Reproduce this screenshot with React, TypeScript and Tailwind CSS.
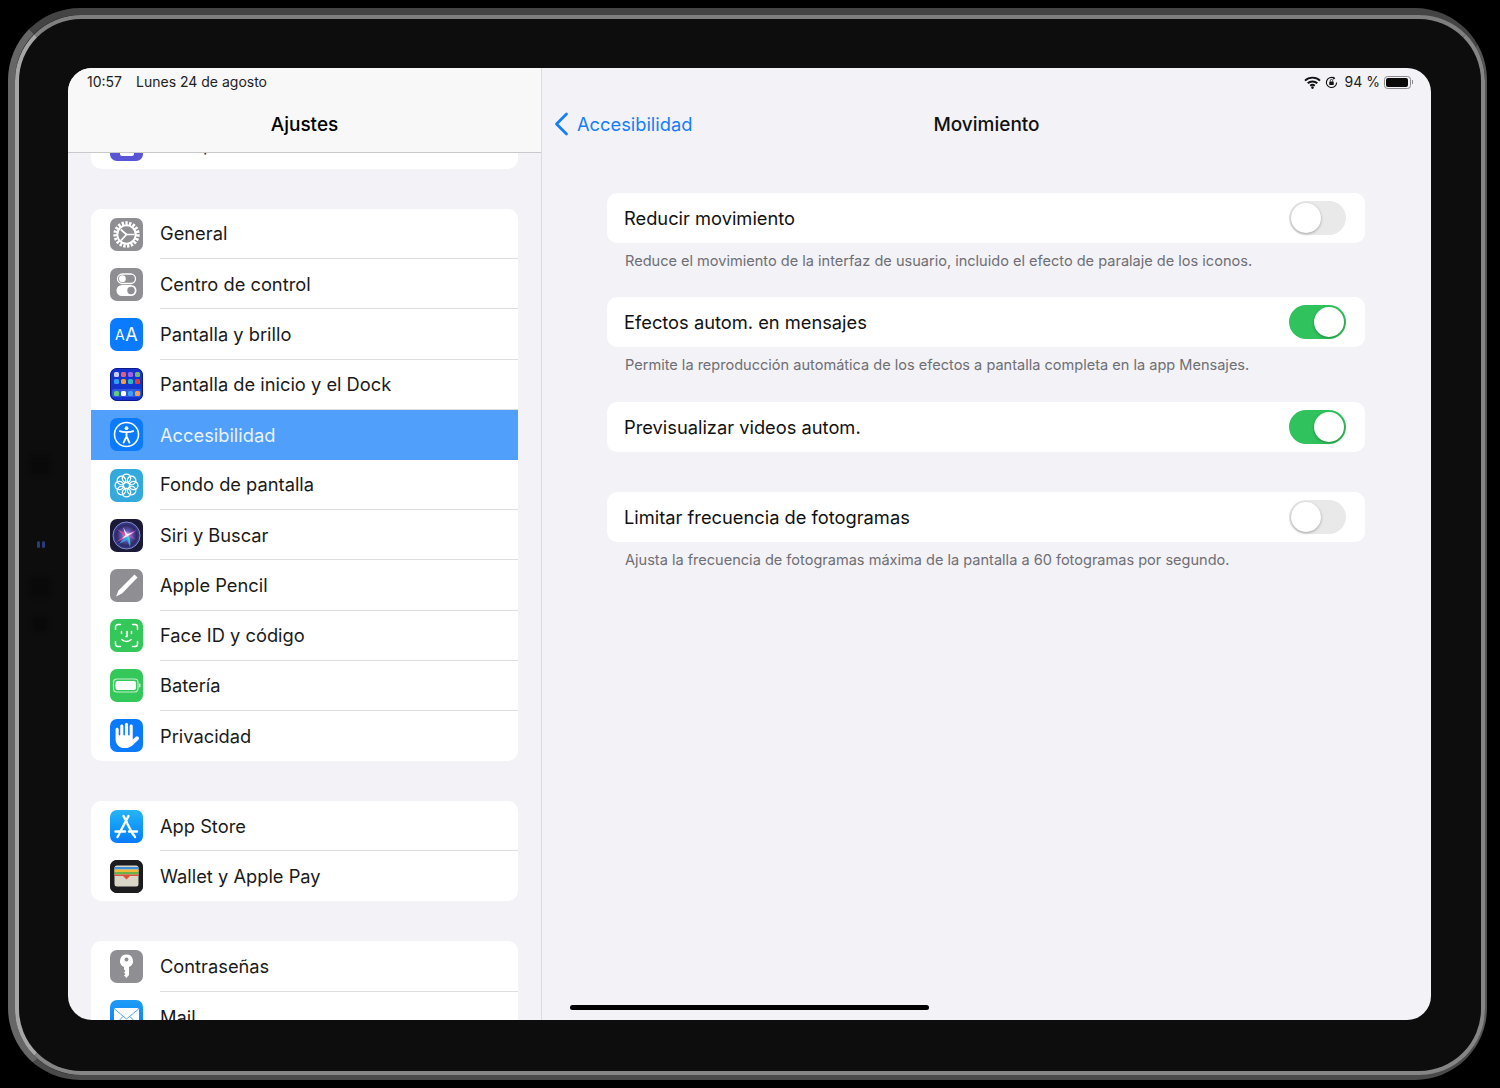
import { FaHand } from "react-icons/fa6";
import type { ReactNode } from "react";

function IconBox({ className, children }: { className: string; children: ReactNode }) {
  return (
    <div className={`flex h-[33px] w-[33px] shrink-0 items-center justify-center overflow-hidden rounded-[7px] ${className}`}>
      {children}
    </div>
  );
}

function GearIcon() {
  return (
    <svg width="29" height="29" viewBox="0 0 29 29" fill="none" stroke="white">
      <circle cx="14.5" cy="14.5" r="11.3" strokeWidth="3.8" strokeDasharray="2.3 1.4" />
      <circle cx="14.5" cy="14.5" r="9.2" strokeWidth="2" />
      <path d="M14.5 14.5 L8.8 9.5 M14.5 14.5 L22.5 14.5 M14.5 14.5 L9 20.5" strokeWidth="1.7" />
    </svg>
  );
}

function ControlIcon() {
  return (
    <svg width="33" height="33" viewBox="0 0 33 33">
      <rect x="7.5" y="6" width="18" height="9.5" rx="4.75" fill="none" stroke="white" strokeWidth="1.3" />
      <circle cx="12.4" cy="10.7" r="3.4" fill="white" />
      <rect x="6.5" y="17" width="20" height="11" rx="5.5" fill="white" />
      <circle cx="21" cy="22.5" r="3.7" fill="#8e8e93" />
    </svg>
  );
}

function HomeIcon() {
  const rows = [
    ["#c8d0f0", "#e0607a", "#a060e0", "#70b870"],
    ["#30a0f0", "#f0a030", "#30b8c0", "#d84040"],
  ];
  const dock = ["#60d070", "#ffffff", "#40a0f0", "#f0a050"];
  return (
    <div className="flex h-full w-full flex-col justify-center gap-[2px] rounded-[7px] border border-[#0d1b8a] bg-[#1434d0]">
      {rows.map((row, i) => (
        <div key={i} className="flex justify-center gap-[2px]">
          {row.map((c, j) => (
            <div key={j} className="h-[5px] w-[5px] rounded-[1.5px]" style={{ backgroundColor: c }} />
          ))}
        </div>
      ))}
      <div className="mx-[1px] mt-[3px] flex justify-center gap-[2px] rounded-[2px] bg-[#2f5ae0] py-[1.5px]">
        {dock.map((c, j) => (
          <div key={j} className="h-[5px] w-[5px] rounded-[1.5px]" style={{ backgroundColor: c }} />
        ))}
      </div>
    </div>
  );
}

function AccessIcon() {
  return (
    <svg width="33" height="33" viewBox="0 0 33 33" fill="none" stroke="white">
      <circle cx="16.5" cy="16.5" r="12" strokeWidth="1.6" />
      <circle cx="16.5" cy="10.2" r="1.9" fill="white" stroke="none" />
      <path d="M9.8 13.2 C13 14.4 20 14.4 23.2 13.2 M16.5 14.4 V18.4 M16.5 18.4 L13.6 24.6 M16.5 18.4 L19.4 24.6" strokeWidth="1.9" strokeLinecap="round" />
    </svg>
  );
}

function FlowerIcon() {
  const petals = [0, 45, 90, 135, 180, 225, 270, 315];
  return (
    <svg width="33" height="33" viewBox="0 0 33 33" fill="none" stroke="white" strokeWidth="1.3">
      {petals.map((a) => (
        <circle key={a} cx="16.5" cy="9.3" r="4.2" transform={`rotate(${a} 16.5 16.5)`} />
      ))}
      <circle cx="16.5" cy="16.5" r="3.2" />
    </svg>
  );
}

function SiriIcon() {
  return (
    <svg width="33" height="33" viewBox="0 0 33 33">
      <defs>
        <radialGradient id="siriOrb" cx="50%" cy="50%" r="50%">
          <stop offset="0%" stopColor="#e8f4ff" />
          <stop offset="35%" stopColor="#6a5ab8" />
          <stop offset="75%" stopColor="#2c2a66" />
          <stop offset="100%" stopColor="#3a3f90" />
        </radialGradient>
      </defs>
      <circle cx="16.5" cy="16.5" r="13.5" fill="url(#siriOrb)" stroke="#8288cc" strokeWidth="1" />
      <path d="M16.5 15 L7 10 L14 17 L6 23 L16 19 Z" fill="#e0489a" opacity="0.85" />
      <path d="M16 17 L9 25 L17 21 L20 28 L20 18 Z" fill="#2fa8e8" opacity="0.9" />
      <path d="M17 16 L26 21 L21 16 L27 11 L18 14 Z" fill="#c84fc0" opacity="0.8" />
      <path d="M16.5 17.5 L21 27 L19 18 Z" fill="#40e0b0" opacity="0.8" />
      <path d="M13 8 L17 15 L24 13 L18 17 L12 20 L15.5 16 Z" fill="#ffffff" opacity="0.9" />
    </svg>
  );
}

function PencilIcon() {
  return (
    <svg width="33" height="33" viewBox="0 0 33 33" fill="white">
      <path d="M24.5 5.5 L27.5 8.5 L12 24.5 L6 27.5 L8.5 21.5 Z" />
    </svg>
  );
}

function FaceIcon() {
  return (
    <svg width="33" height="33" viewBox="0 0 33 33" fill="none" stroke="white" strokeWidth="1.5" strokeLinecap="round">
      <path d="M5.5 10.5 V8 A2.5 2.5 0 0 1 8 5.5 H10.5 M22.5 5.5 H25 A2.5 2.5 0 0 1 27.5 8 V10.5 M27.5 22.5 V25 A2.5 2.5 0 0 1 25 27.5 H22.5 M10.5 27.5 H8 A2.5 2.5 0 0 1 5.5 25 V22.5" />
      <path d="M11.5 12.5 V14.5 M21.5 12.5 V14.5 M17 12.5 V17.5 H15.8 M11.8 20.5 C14 23 19 23 21.2 20.5" />
    </svg>
  );
}

function BatteryIcon() {
  return (
    <svg width="33" height="33" viewBox="0 0 33 33">
      <rect x="3.5" y="10" width="24.5" height="13" rx="3.5" fill="none" stroke="#c8f0d0" strokeWidth="1.2" />
      <rect x="5.5" y="12" width="20.5" height="9" rx="2" fill="white" />
      <rect x="29" y="14.5" width="1.5" height="4" rx="0.75" fill="#c8f0d0" />
    </svg>
  );
}

function AppStoreIcon() {
  return (
    <svg width="33" height="33" viewBox="0 0 33 33" fill="none" stroke="white" strokeWidth="2.4" strokeLinecap="round">
      <path d="M18.5 6 L9.5 23 M13.5 6 L17 12.5 M17.5 14 L23 24.5 M5.5 21.5 H15 M19 21.5 H27 M9 24.5 L7.5 27 M23.5 24.5 L25 27" />
    </svg>
  );
}

function WalletIcon() {
  return (
    <svg width="33" height="33" viewBox="0 0 33 33">
      <rect x="0" y="0" width="33" height="33" fill="#1c1c1e" />
      <rect x="4.5" y="5.5" width="24" height="21" rx="2.5" fill="#d9d6c8" />
      <rect x="4.5" y="7" width="24" height="2.5" fill="#3f8fd8" />
      <rect x="4.5" y="9.5" width="24" height="2.5" fill="#f0b93a" />
      <rect x="4.5" y="12" width="24" height="2.5" fill="#6cb24a" />
      <path d="M4.5 14.5 H28.5 V16 H20 L16.5 19.5 L13 16 H4.5 Z" fill="#e2513f" />
    </svg>
  );
}

function KeyIcon() {
  return (
    <svg width="33" height="33" viewBox="0 0 33 33" fill="white">
      <path fillRule="evenodd" d="M16.5 4.5 A6.5 6.5 0 0 1 19 17 V25 L16.5 28 L14 25.5 L15.5 24 L14 22.5 L15.5 21 L14 19.5 V17 A6.5 6.5 0 0 1 16.5 4.5 Z M16.5 7.5 A2 2 0 1 0 16.5 11.5 A2 2 0 1 0 16.5 7.5 Z" />
    </svg>
  );
}

function MailIcon() {
  return (
    <svg width="33" height="33" viewBox="0 0 33 33" fill="none">
      <rect x="4" y="8" width="25" height="18" rx="2" fill="white" />
      <path d="M4.5 9 L16.5 19 L28.5 9 M4.5 25.5 L13 16.5 M28.5 25.5 L20 16.5" stroke="#5aa8f0" strokeWidth="1" />
    </svg>
  );
}

function Row({ icon, label, selected, last }: { icon: ReactNode; label: string; selected?: boolean; last?: boolean }) {
  return (
    <div className={`flex h-[50.2px] items-center pl-[19px] ${selected ? "bg-[#4f9ffb]" : ""}`}>
      {icon}
      <div className={`ml-[17px] flex h-full flex-1 items-center text-[18.3px] leading-none ${selected ? "text-[#eaf3ff]" : "text-[#1a1a1a]"} ${last || selected ? "" : "border-b border-[#dedee1]"}`}>
        {label}
      </div>
    </div>
  );
}

function Toggle({ on }: { on?: boolean }) {
  return (
    <div className={`flex h-[34px] w-[57px] items-center rounded-full p-[2px] ${on ? "justify-end bg-[#30c25c]" : "justify-start bg-[#e9e9ea]"}`}>
      <div className="h-[30px] w-[30px] rounded-full bg-white shadow-[0_1px_3px_rgba(0,0,0,0.3)]" />
    </div>
  );
}

function SettingCard({ label, on }: { label: string; on?: boolean }) {
  return (
    <div className="flex h-[50px] items-center justify-between rounded-[10px] bg-white pl-[17px] pr-[19px]">
      <span className="text-[18.3px] leading-none text-[#111]">{label}</span>
      <Toggle on={on} />
    </div>
  );
}

function Note({ children }: { children: ReactNode }) {
  return <p className="px-[18px] pt-[9px] text-[14.55px] leading-[18px] text-[#6f6f74]">{children}</p>;
}

export default function App() {
  return (
    <div className="h-[1088px] w-[1500px] overflow-hidden bg-black pl-[8px] pt-[8px] [font-family:Inter,sans-serif]">
      {/* outer edge of the device */}
      <div className="h-[1072px] w-[1479px] rounded-[72px] border-b-[5px] border-l-[7px] border-r-[2px] border-t-[7px] border-b-[#4a4a4a] border-l-[#666] border-r-[#555] border-t-[#444]">
        <div className="relative h-[1060px] w-[1470px] rounded-[66px] border-[4px] border-b-[#858585] border-l-[#a6a6a6] border-r-[#858585] border-t-[#7f7f7f] bg-[#0d0d0d] pb-[51px] pl-[49px] pr-[50px] pt-[49px]">
          <div className="absolute left-[18px] top-[522px] flex gap-[2px]">
            <div className="h-[7px] w-[3px] rounded-full bg-[#2a3c78]" />
            <div className="h-[7px] w-[3px] rounded-full bg-[#2a3c78]" />
          </div>
          <div className="absolute left-[11px] top-[436px] h-[20px] w-[20px] rounded-[6px] bg-[#090909] blur-[2px]" />
          <div className="absolute left-[11px] top-[558px] h-[20px] w-[20px] rounded-[6px] bg-[#090909] blur-[2px]" />
          <div className="absolute left-[13px] top-[597px] h-[16px] w-[16px] rounded-full bg-[#090909] blur-[2px]" />

          <div className="relative flex h-full overflow-hidden rounded-[24px] bg-[#f2f2f7]">
            <aside className="flex w-[474px] shrink-0 flex-col overflow-hidden border-r border-[#dcdce0]">
              <header className="z-10 h-[85px] shrink-0 border-b border-[#c9c9cc] bg-[#f8f8f9] pl-[19px] pt-[5px]">
                <div className="flex gap-[14px] text-[14px] leading-[17px] text-[#222]">
                  <span>10:57</span>
                  <span>Lunes 24 de agosto</span>
                </div>
                <div className="-ml-[19px] mt-[21px] text-center text-[19px] font-medium leading-[28px] text-black">Ajustes</div>
              </header>

              <div className="flex flex-col gap-[40px] pl-[23px] pr-[23px]">
                <div className="h-[16px] overflow-hidden rounded-b-[10px] bg-white">
                  <div className="-mt-[34px]">
                    <Row
                      icon={<IconBox className="bg-[#5856d6]"><div className="mt-[10px] h-[14px] w-[14px] rounded-[2px] bg-white" /></IconBox>}
                      label="Tiempo de uso"
                      last
                    />
                  </div>
                </div>

                <div className="overflow-hidden rounded-[10px] bg-white">
                  <Row icon={<IconBox className="bg-[#8e8e93]"><GearIcon /></IconBox>} label="General" />
                  <Row icon={<IconBox className="bg-[#8e8e93]"><ControlIcon /></IconBox>} label="Centro de control" />
                  <Row icon={<IconBox className="bg-[#0a7aff] pt-[1px] text-[18px] tracking-[0.5px] text-white"><span className="text-[14px]">A</span>A</IconBox>} label="Pantalla y brillo" />
                  <Row icon={<IconBox className="bg-[#1434d0]"><HomeIcon /></IconBox>} label="Pantalla de inicio y el Dock" />
                  <Row icon={<IconBox className="bg-[#0a7aff]"><AccessIcon /></IconBox>} label="Accesibilidad" selected />
                  <Row icon={<IconBox className="bg-[#34aadc]"><FlowerIcon /></IconBox>} label="Fondo de pantalla" />
                  <Row icon={<IconBox className="bg-[#1a1a38]"><SiriIcon /></IconBox>} label="Siri y Buscar" />
                  <Row icon={<IconBox className="bg-[#8e8e93]"><PencilIcon /></IconBox>} label="Apple Pencil" />
                  <Row icon={<IconBox className="bg-[#34c759]"><FaceIcon /></IconBox>} label="Face ID y código" />
                  <Row icon={<IconBox className="bg-[#34c759]"><BatteryIcon /></IconBox>} label="Batería" />
                  <Row icon={<IconBox className="bg-[#0a7aff] text-[25px] text-white"><FaHand className="-scale-x-100" /></IconBox>} label="Privacidad" last />
                </div>

                <div className="overflow-hidden rounded-[10px] bg-white">
                  <Row icon={<IconBox className="bg-gradient-to-b from-[#28b5f5] to-[#0a7aff]"><AppStoreIcon /></IconBox>} label="App Store" />
                  <Row icon={<IconBox className="bg-[#1c1c1e]"><WalletIcon /></IconBox>} label="Wallet y Apple Pay" last />
                </div>

                <div className="rounded-t-[10px] bg-white">
                  <Row icon={<IconBox className="bg-[#8e8e93]"><KeyIcon /></IconBox>} label="Contraseñas" />
                  <Row icon={<IconBox className="bg-gradient-to-b from-[#1e9cf5] to-[#0a7aff]"><MailIcon /></IconBox>} label="Mail" last />
                </div>
              </div>
            </aside>

            <main className="flex flex-1 flex-col">
              <div className="flex h-[28px] items-center justify-end pr-[18px]">
                <svg width="17" height="13" viewBox="0 0 17 13" fill="none" stroke="#111" strokeWidth="1.9">
                  <path d="M1 4.6 C5 0.6 12 0.6 16 4.6 M3.7 7.3 C6.2 4.9 10.8 4.9 13.3 7.3 M6.2 9.8 C7.5 8.7 9.5 8.7 10.8 9.8" />
                  <circle cx="8.5" cy="11.6" r="1.3" fill="#111" stroke="none" />
                </svg>
                <svg className="ml-[4px]" width="13" height="13" viewBox="0 0 13 13" fill="none" stroke="#111" strokeWidth="1.1">
                  <path d="M11.6 6.5 A5.1 5.1 0 1 1 9 2" />
                  <path d="M8.2 0.6 L10.4 2.2 L8.2 3.8 Z" fill="#111" stroke="none" />
                  <rect x="4.3" y="5.5" width="4.4" height="3.6" rx="0.6" fill="#111" stroke="none" />
                  <path d="M5.3 5.5 V4.6 A1.2 1.2 0 0 1 7.7 4.6 V5.5" strokeWidth="0.8" />
                </svg>
                <span className="ml-[7px] text-[14px] leading-none text-[#222]">94 %</span>
                <div className="ml-[4px] flex items-center">
                  <div className="h-[13px] w-[27px] rounded-[3.5px] border border-[#8a8a8e] p-[1px]">
                    <div className="h-full w-[94%] rounded-[2px] bg-[#0a0a0a]" />
                  </div>
                  <div className="ml-[1px] h-[4px] w-[1px] bg-[#8a8a8e]" />
                </div>
              </div>

              <nav className="relative flex h-[56px] items-center justify-center">
                <div className="absolute left-[12px] top-[16px] flex items-center gap-[8px] text-[#147efb]">
                  <svg width="15" height="24" viewBox="0 0 15 24" fill="none" stroke="currentColor" strokeWidth="2.8" strokeLinecap="round" strokeLinejoin="round">
                    <path d="M12.5 2 L2.5 12 L12.5 22" />
                  </svg>
                  <span className="text-[18.3px] leading-none">Accesibilidad</span>
                </div>
                <span className="text-[19px] font-medium leading-none text-[#111]">Movimiento</span>
              </nav>

              <div className="ml-[65px] mr-[66px] mt-[41px] flex flex-col">
                <SettingCard label="Reducir movimiento" />
                <Note>Reduce el movimiento de la interfaz de usuario, incluido el efecto de paralaje de los iconos.</Note>
                <div className="mt-[27px]">
                  <SettingCard label="Efectos autom. en mensajes" on />
                </div>
                <Note>Permite la reproducción automática de los efectos a pantalla completa en la app Mensajes.</Note>
                <div className="mt-[28px]">
                  <SettingCard label="Previsualizar videos autom." on />
                </div>
                <div className="mt-[40px]">
                  <SettingCard label="Limitar frecuencia de fotogramas" />
                </div>
                <Note>Ajusta la frecuencia de fotogramas máxima de la pantalla a 60 fotogramas por segundo.</Note>
              </div>
            </main>

            <div className="absolute bottom-[10px] left-[502px] h-[5px] w-[359px] rounded-full bg-black" />
          </div>
        </div>
      </div>
    </div>
  );
}
